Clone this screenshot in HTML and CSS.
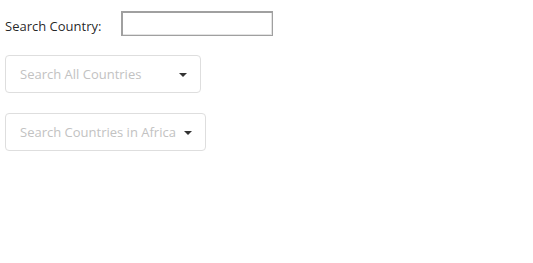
FILE: index.html
```html
<!DOCTYPE html>
<html>
<head>
<meta charset="utf-8">
<link rel="stylesheet" href="styles.css">
</head>
<body>
<div class="page">
  <div class="search-row">
    <label class="search-label" for="country">Search Country:</label>
    <input id="country" class="search-input" type="text">
  </div>
  <div class="dropdown dd-first">
    <span class="dd-text">Search All Countries</span>
    <span class="dd-caret"></span>
  </div>
  <div class="dropdown dd-second">
    <span class="dd-text">Search Countries in Africa</span>
    <span class="dd-caret"></span>
  </div>
</div>
</body>
</html>
```
FILE: styles.css
```css
html, body {
  margin: 0;
  padding: 0;
  background: #fff;
}
.page {
  padding: 11px 5px;
  font-family: "Open Sans", "Noto Sans", sans-serif;
  font-size: 13px;
  color: rgba(0, 0, 0, 0.87);
  display: flex;
  flex-direction: column;
  align-items: flex-start;
}
.search-row {
  display: flex;
  align-items: center;
  height: 25px;
}
.search-label {
  width: 116px;
  position: relative;
  top: 2px;
}
.search-input {
  box-sizing: border-box;
  width: 152px;
  height: 25px;
  margin: 0;
  padding: 2px 3px;
  border: 1px solid #a0a0a0;
  box-shadow: inset 1px 1px 0 #a0a0a0, inset -1px -1px 0 #e3e3e3;
  outline: none;
  background: #fff;
  font: inherit;
}
.dropdown {
  box-sizing: border-box;
  position: relative;
  min-width: 196px;
  height: 38px;
  padding: 0 29px 0 14px;
  border: 1px solid #dedede;
  border-radius: 4px;
  display: flex;
  align-items: center;
  color: #c2c2c2;
  font-size: 13px;
}
.dd-first {
  margin-top: 19px;
}
.dd-second {
  margin-top: 20px;
}
.dd-caret {
  position: absolute;
  right: 13px;
  top: 17px;
  width: 0;
  height: 0;
  border-left: 4px solid transparent;
  border-right: 4px solid transparent;
  border-top: 4px solid #333;
}
```
